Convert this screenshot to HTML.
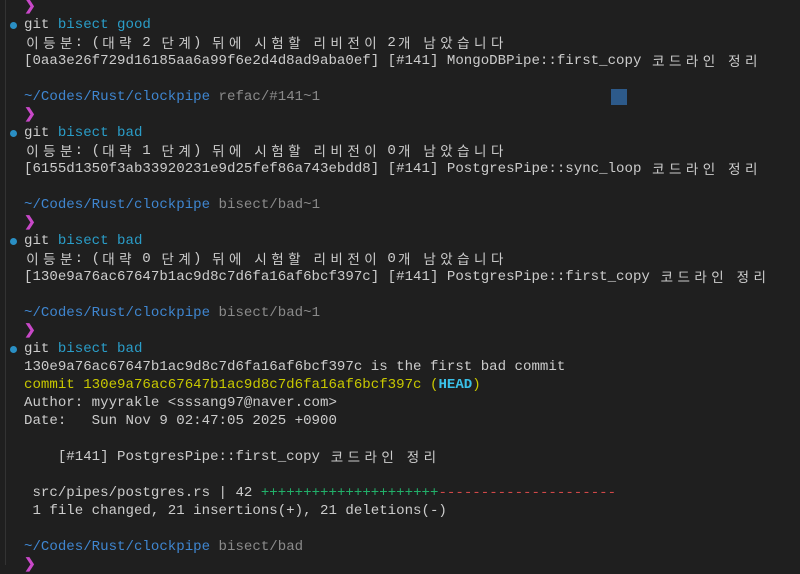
<!DOCTYPE html>
<html><head><meta charset="utf-8"><style>
html,body{margin:0;padding:0;background:#1f1f1f;width:800px;height:565px;overflow:hidden}
#t{position:absolute;left:0;top:-2px;font-family:"Liberation Mono","Noto Sans CJK KR",monospace;font-size:14.1px;color:#cccccc;}
.l{height:18px;line-height:18px;white-space:pre;padding-left:24px;position:relative;overflow:hidden}
.k{display:inline-block;width:16.9px;text-align:center;height:18px;line-height:18px;vertical-align:top;font-family:"Noto Sans CJK KR",sans-serif;font-size:13.5px;position:relative;top:-1px}
.dot:before{content:"";position:absolute;left:10px;top:6px;width:7px;height:7px;border-radius:50%;background:#2a8fc4}
.p{color:#c848c8;font-weight:bold}
.c{color:#2a9dc8}.b{color:#3f86d0}.g{color:#8a8a8a}.y{color:#c8c800}.h{color:#3ac0e8;font-weight:bold}
.gr{color:#22b06a}.r{color:#d04848}
#bar{position:absolute;left:5px;top:0;width:1px;height:565px;background:#333}
#cur{position:absolute;left:611px;top:89px;width:16px;height:16px;background:#2d5a8a}
</style></head><body>
<div id="bar"></div><div id="cur"></div>
<div id="t">
<div class="l"><span class="p">❯</span></div>
<div class="l dot">git <span class="c">bisect good</span></div>
<div class="l ko">이등분: (대략 2 단계) 뒤에 시험할 리비전이 2개 남았습니다</div>
<div class="l ko">[0aa3e26f729d16185aa6a99f6e2d4d8ad9aba0ef] [#141] MongoDBPipe::first_copy 코드라인 정리</div>
<div class="l"> </div>
<div class="l"><span class="b">~/Codes/Rust/clockpipe</span> <span class="g">refac/#141~1</span></div>
<div class="l"><span class="p">❯</span></div>
<div class="l dot">git <span class="c">bisect bad</span></div>
<div class="l ko">이등분: (대략 1 단계) 뒤에 시험할 리비전이 0개 남았습니다</div>
<div class="l ko">[6155d1350f3ab33920231e9d25fef86a743ebdd8] [#141] PostgresPipe::sync_loop 코드라인 정리</div>
<div class="l"> </div>
<div class="l"><span class="b">~/Codes/Rust/clockpipe</span> <span class="g">bisect/bad~1</span></div>
<div class="l"><span class="p">❯</span></div>
<div class="l dot">git <span class="c">bisect bad</span></div>
<div class="l ko">이등분: (대략 0 단계) 뒤에 시험할 리비전이 0개 남았습니다</div>
<div class="l ko">[130e9a76ac67647b1ac9d8c7d6fa16af6bcf397c] [#141] PostgresPipe::first_copy 코드라인 정리</div>
<div class="l"> </div>
<div class="l"><span class="b">~/Codes/Rust/clockpipe</span> <span class="g">bisect/bad~1</span></div>
<div class="l"><span class="p">❯</span></div>
<div class="l dot">git <span class="c">bisect bad</span></div>
<div class="l">130e9a76ac67647b1ac9d8c7d6fa16af6bcf397c is the first bad commit</div>
<div class="l"><span class="y">commit 130e9a76ac67647b1ac9d8c7d6fa16af6bcf397c (</span><span class="h">HEAD</span><span class="y">)</span></div>
<div class="l">Author: myyrakle &lt;sssang97@naver.com&gt;</div>
<div class="l">Date:   Sun Nov 9 02:47:05 2025 +0900</div>
<div class="l"> </div>
<div class="l ko">    [#141] PostgresPipe::first_copy 코드라인 정리</div>
<div class="l"> </div>
<div class="l"> src/pipes/postgres.rs | 42 <span class="gr">+++++++++++++++++++++</span><span class="r">---------------------</span></div>
<div class="l"> 1 file changed, 21 insertions(+), 21 deletions(-)</div>
<div class="l"> </div>
<div class="l"><span class="b">~/Codes/Rust/clockpipe</span> <span class="g">bisect/bad</span></div>
<div class="l"><span class="p">❯</span></div>
</div>
<script>
document.querySelectorAll('.ko').forEach(function(e){
  e.innerHTML=e.innerHTML.replace(/([\uAC00-\uD7A3])/g,'<span class="k">$1</span>');
});
</script>
</body></html>
